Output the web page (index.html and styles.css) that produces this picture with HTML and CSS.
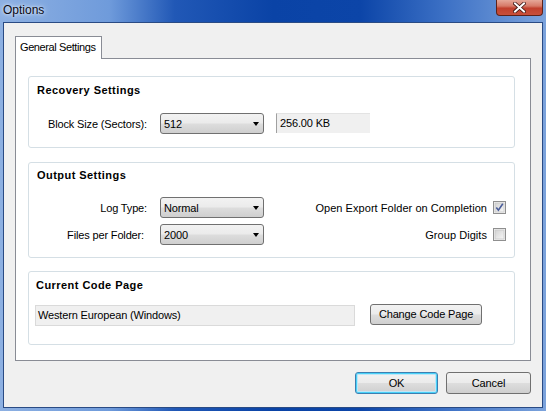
FILE: index.html
```html
<!DOCTYPE html>
<html>
<head>
<meta charset="utf-8">
<link rel="stylesheet" href="styles.css">
</head>
<body>
<div class="window">
  <div class="titlebar">
    <span class="title">Options</span>
    <div class="close">
      <svg width="13" height="11" viewBox="0 0 13 11"><path d="M2 1.5 L11 9.5 M11 1.5 L2 9.5" stroke="#3a1410" stroke-width="3.6" stroke-linecap="square"/><path d="M2 1.5 L11 9.5 M11 1.5 L2 9.5" stroke="#ffffff" stroke-width="2" stroke-linecap="square"/></svg>
    </div>
  </div>
  <div class="client">
    <div class="tabs"><div class="tab">General Settings</div></div>
    <div class="panel">
      <div class="group g1">
        <div class="gtitle">Recovery Settings</div>
        <div class="row r1">
          <span class="lbl">Block Size (Sectors):</span>
          <div class="combo"><span>512</span><i class="arrow"></i></div>
          <div class="readout">256.00 KB</div>
        </div>
      </div>
      <div class="group g2">
        <div class="gtitle">Output Settings</div>
        <div class="body2">
          <div class="leftcol">
            <div class="row">
              <span class="lbl">Log Type:</span>
              <div class="combo"><span>Normal</span><i class="arrow"></i></div>
            </div>
            <div class="row">
              <span class="lbl files">Files per Folder:</span>
              <div class="combo"><span>2000</span><i class="arrow"></i></div>
            </div>
          </div>
          <div class="rightcol">
            <div class="row chkrow">
              <span>Open Export Folder on Completion</span>
              <svg class="chk" width="13" height="13" viewBox="0 0 13 13"><defs><linearGradient id="cg" x1="0" y1="0" x2="1" y2="1"><stop offset="0" stop-color="#d2d2d2"/><stop offset="1" stop-color="#f7f7f7"/></linearGradient></defs><rect x="0.5" y="0.5" width="12" height="12" fill="#f4f4f4" stroke="#8f8f8f"/><rect x="2" y="2" width="9" height="9" fill="url(#cg)" stroke="#c8c8c8" stroke-width="0.8"/><path d="M3.3 6.4 L5.4 9.2 L9.8 2.8" fill="none" stroke="#4a5d9a" stroke-width="1.6"/></svg>
            </div>
            <div class="row chkrow">
              <span>Group Digits</span>
              <svg class="chk" width="13" height="13" viewBox="0 0 13 13"><defs><linearGradient id="cg2" x1="0" y1="0" x2="1" y2="1"><stop offset="0" stop-color="#d2d2d2"/><stop offset="1" stop-color="#f7f7f7"/></linearGradient></defs><rect x="0.5" y="0.5" width="12" height="12" fill="#f4f4f4" stroke="#8f8f8f"/><rect x="2" y="2" width="9" height="9" fill="url(#cg2)" stroke="#c8c8c8" stroke-width="0.8"/></svg>
            </div>
          </div>
        </div>
      </div>
      <div class="group g3">
        <div class="gtitle">Current Code Page</div>
        <div class="row r3">
          <div class="textbox">Western European (Windows)</div>
          <button class="btn change">Change Code Page</button>
        </div>
      </div>
    </div>
    <div class="buttons">
      <button class="btn ok">OK</button>
      <button class="btn cancel">Cancel</button>
    </div>
  </div>
</div>
</body>
</html>
```

FILE: styles.css
```css
html, body {
  margin: 0;
  padding: 0;
  background: #ffffff;
}

.window {
  width: 546px;
  height: 411px;
  box-sizing: border-box;
  display: flex;
  flex-direction: column;
  background: linear-gradient(90deg, #8db0e2 0%, #6f9bdb 20%, #2158b6 32%, #0a43a6 50%, #0c45a8 66%, #3e72c6 82%, #7ca3dc 100%);
  font-family: "Liberation Sans", Arial, sans-serif;
  font-size: 11px;
  letter-spacing: -0.15px;
  color: #000;
}

.titlebar {
  height: 22px;
  display: flex;
  align-items: flex-start;
}

.title {
  font-size: 12px;
  letter-spacing: 0;
  line-height: 20px;
  margin-left: 3px;
  color: #0a0a14;
  text-shadow: 0 0 6px #dfeaf8, 0 0 3px #e8f0fb;
}

.close {
  margin-left: auto;
  margin-right: 3px;
  width: 47px;
  height: 16px;
  box-sizing: border-box;
  border: 1px solid #5e2219;
  border-top: none;
  border-radius: 0 0 4px 4px;
  background: linear-gradient(180deg, #e6a899 0%, #d77a68 40%, #c1402d 55%, #c8503b 100%);
  display: flex;
  align-items: center;
  justify-content: center;
}

.client {
  margin: 0 3px 3px 3px;
  height: 386px;
  box-sizing: border-box;
  border: 1px solid #2a4b84;
  background: #f0f0f0;
  display: flex;
  flex-direction: column;
}

.tabs {
  padding: 13px 0 0 11px;
  display: flex;
}

.tab {
  position: relative;
  z-index: 1;
  width: 87px;
  height: 23px;
  box-sizing: border-box;
  border: 1px solid #898c95;
  border-bottom: none;
  background: #ffffff;
  padding-left: 4px;
  line-height: 21px;
  letter-spacing: -0.4px;
  margin-bottom: -1px;
}

.panel {
  margin: 0 11px;
  height: 303px;
  box-sizing: border-box;
  border: 1px solid #898c95;
  background: #ffffff;
  padding: 17px 15px 0 12px;
}

.group {
  box-sizing: border-box;
  border: 1px solid #d5dfe5;
  border-radius: 3px;
}

.g1 {
  height: 72px;
  padding-top: 7px;
}

.g2 {
  height: 96px;
  margin-top: 14px;
  padding-top: 6px;
}

.g3 {
  height: 74px;
  margin-top: 13px;
  padding-top: 7px;
}

.gtitle {
  font-weight: bold;
  letter-spacing: 0.45px;
  line-height: 13px;
  padding-left: 8px;
}

.g3 .gtitle {
  padding-left: 7px;
}

.row {
  display: flex;
  align-items: center;
  height: 21px;
}

.r1 {
  margin-top: 16px;
}

.lbl {
  width: 131px;
  box-sizing: border-box;
  text-align: right;
  padding-right: 13px;
}

.lbl.files {
  padding-right: 16px;
}

.combo {
  width: 104px;
  height: 21px;
  box-sizing: border-box;
  border: 1px solid #707070;
  border-radius: 3px;
  background: linear-gradient(180deg, #f2f2f2 0%, #ebebeb 48%, #dddddd 52%, #cfcfcf 100%);
  display: flex;
  align-items: center;
  padding-left: 3px;
}

.arrow {
  margin-left: auto;
  margin-right: 4px;
  width: 0;
  height: 0;
  border-left: 3.5px solid transparent;
  border-right: 3.5px solid transparent;
  border-top: 4px solid #000;
}

.readout {
  margin-left: 12px;
  width: 94px;
  height: 20px;
  box-sizing: border-box;
  background: #f0f0f0;
  border-top: 1px solid #e3e3e3;
  border-left: 1px solid #a0a0a0;
  line-height: 19px;
  padding-left: 3px;
  align-self: flex-start;
}

.body2 {
  display: flex;
  margin-top: 15px;
}

.leftcol {
  display: flex;
  flex-direction: column;
  gap: 6px;
}

.rightcol {
  margin-left: auto;
  padding-right: 8px;
  display: flex;
  flex-direction: column;
  gap: 6px;
  align-items: flex-end;
}

.chkrow {
  gap: 6px;
  letter-spacing: 0.05px;
}

.chk {
  display: block;
}

.r3 {
  margin-top: 12px;
  align-items: flex-start;
  padding-left: 6px;
}

.textbox {
  margin-top: 1px;
  width: 320px;
  height: 21px;
  box-sizing: border-box;
  border: 1px solid #dadada;
  background: #f0f0f0;
  line-height: 19px;
  padding-left: 2px;
}

.btn {
  font-family: "Liberation Sans", Arial, sans-serif;
  font-size: 11px;
  letter-spacing: -0.15px;
  color: #000;
  height: 21px;
  box-sizing: border-box;
  border: 1px solid #707070;
  border-radius: 3px;
  background: linear-gradient(180deg, #f2f2f2 0%, #ebebeb 48%, #dddddd 52%, #cfcfcf 100%);
  padding: 0;
  margin: 0;
  text-align: center;
  line-height: 19px;
}

.change {
  margin-left: 15px;
  width: 112px;
}

.buttons {
  margin-top: 11px;
  padding-right: 11px;
  display: flex;
  justify-content: flex-end;
  gap: 8px;
}

.buttons .btn {
  height: 22px;
}

.ok {
  width: 83px;
  border-color: #3c7fb1;
  box-shadow: inset 0 0 0 1px #48d1f8, inset 0 0 0 2px #bfe6f7;
}

.cancel {
  width: 85px;
}
```
